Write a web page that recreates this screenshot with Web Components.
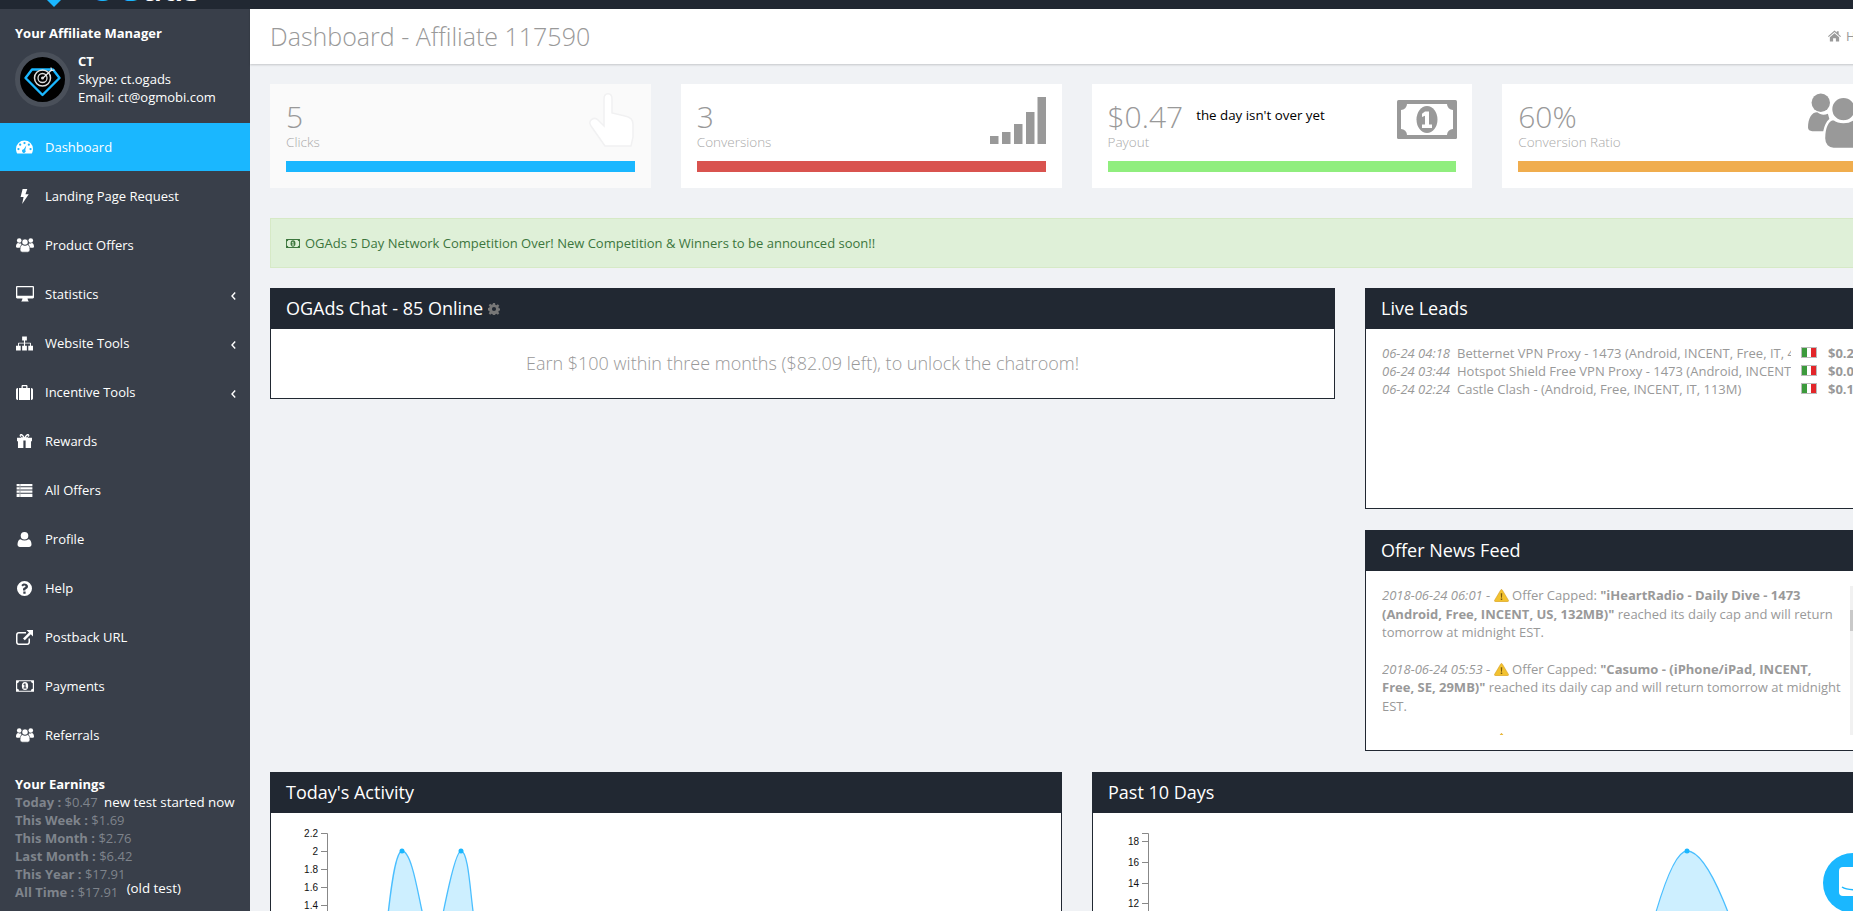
<!DOCTYPE html>
<html lang="en">
<head>
<meta charset="utf-8">
<title>OGAds Dashboard</title>
<style>
  html, body { margin: 0; height: 911px; overflow: hidden; background: #f0f2f5; }
  body { font: 13px/18px "Open Sans", "Liberation Sans", sans-serif; }
</style>
</head>
<body>
<og-app></og-app>

<script>
const ICONS = {
  dashboard: ['0 0 18 14', '<path fill-rule="evenodd" d="M9 0a9 9 0 0 1 9 9c0 2-.6 3.7-1.3 5H1.3C.6 12.7 0 11 0 9a9 9 0 0 1 9-9zM9 1.6a1.2 1.2 0 1 0 0 2.4 1.2 1.2 0 0 0 0-2.4zM4.4 3.4a1.2 1.2 0 1 0 0 2.4 1.2 1.2 0 0 0 0-2.4zM13.6 3.4a1.2 1.2 0 1 0 0 2.4 1.2 1.2 0 0 0 0-2.4zM2.6 8a1.2 1.2 0 1 0 0 2.4 1.2 1.2 0 0 0 0-2.4zM15.4 8a1.2 1.2 0 1 0 0 2.4 1.2 1.2 0 0 0 0-2.4zM11 5.2L8.2 9.4a1.9 1.9 0 1 0 1.6.7z"/>'],
  bolt: ['0 0 10 16', '<path d="M3 0h5L6 5.500h3.500L2.500 16 4 8.500H.8z"/>'],
  users: ['0 0 20 16', '<circle cx="3.600" cy="3" r="2.600"/><circle cx="16.400" cy="3" r="2.600"/><path d="M0 10c0-2.600 1-4.300 2.600-4.300 1 .8 2 .8 3 .4L7 11H1.200C.5 11 0 10.700 0 10zM20 10c0-2.600-1-4.300-2.600-4.300-1 .8-2 .8-3 .4L13 11h5.800c.7 0 1.200-.3 1.200-1z"/><circle cx="10" cy="4.800" r="3.500" stroke="var(--gap, transparent)" stroke-width=".7"/><path d="M4.500 13c0-3 1-5.400 2.800-5.400 1.500 1.100 3.900 1.100 5.400 0 1.800 0 2.800 2.400 2.800 5.400 0 1.900-1.200 3-2.700 3H7.200c-1.500 0-2.700-1.100-2.700-3z" stroke="var(--gap, transparent)" stroke-width=".7"/>'],
  desktop: ['0 0 18 16', '<path fill-rule="evenodd" d="M1.200 0h15.600C17.500 0 18 .5 18 1.200v10.100c0 .7-.5 1.200-1.200 1.200H11.500l.5 1.800.8 1.200H5.200l.8-1.200.5-1.800H1.200C.5 12.500 0 12 0 11.300V1.200C0 .5.500 0 1.200 0zM1.300 1.300v8.400h15.400V1.300z"/>'],
  sitemap: ['0 0 18 15', '<path d="M6.500 0h5v4.200H9.600v2.400h5.600c.4 0 .6.200.6.600v2.600H18V15h-5V9.800h1.800V7.600H9.600v2.200h1.900V15h-5V9.800h1.900V7.600H3.200v2.200H5V15H0V9.800h2.200V7.200c0-.4.200-.6.600-.6h5.600V4.200H6.500z"/>'],
  suitcase: ['0 0 17 15', '<path fill-rule="evenodd" d="M5.500 1.200C5.500.5 6 0 6.700 0h3.600c.7 0 1.200.5 1.200 1.200V3h2.500v12H3V3h2.500zM6.800 1.300V3h3.400V1.300zM2 3v12h-.3C.8 15 0 14.200 0 13.300V4.700C0 3.800.8 3 1.700 3zM15 3h.3c.9 0 1.700.8 1.700 1.700v8.600c0 .9-.8 1.700-1.700 1.700H15z"/>'],
  gift: ['0 0 16 15', '<path fill-rule="evenodd" d="M0 4h5.200C3.600 3.400 2.600 2.600 2.800 1.300 3 .2 4.600-.4 5.800.5 6.800 1.200 7.600 2.500 8 3.500 8.400 2.500 9.200 1.200 10.200.5c1.200-.9 2.800-.3 3 .8.2 1.300-.8 2.100-2.400 2.700H16v3.800h-1V15H1V7.800H0zM6.800 7v8h2.400V7zM4.400 1.600c-.6 0-.8.700-.3 1.200.5.400 1.500.9 2.500 1-.5-1-1.300-2.200-2.200-2.200zM11.600 1.600c-.9 0-1.700 1.200-2.200 2.200 1-.1 2-.6 2.500-1 .5-.5.3-1.200-.3-1.200z"/>'],
  list: ['0 0 17 14', '<path fill-rule="evenodd" d="M0 0h17v14H0zM0 2.500v1h17v-1zM0 6v1h17V6zM0 9.500v1h17v-1zM3.400 0v14h.5V0z"/>'],
  user: ['0 0 14 15', '<circle cx="7" cy="3.800" r="3.800"/><path d="M0 12.600C0 9.700 1 7.600 3 7.200c2.300 1.600 5.700 1.600 8 0 2 .4 3 2.500 3 5.400 0 1.500-1 2.400-2.500 2.400h-9C1 15 0 14.100 0 12.600z"/>'],
  help: ['0 0 15 15', '<path fill-rule="evenodd" d="M7.500 0a7.500 7.500 0 1 1 0 15 7.500 7.500 0 0 1 0-15zM6.300 10.500v2.200h2.300v-2.200zM7.600 2.500c-1.500 0-2.600.7-3.200 1.700l1.500 1.200c.4-.5.800-.9 1.500-.9.600 0 1.100.3 1.100.8 0 .6-.5.900-1.100 1.200-.8.400-1.400 1-1.400 2v.9h2.300c0-.7.200-1 1-1.400 1-.6 1.700-1.300 1.700-2.700 0-1.700-1.800-2.800-3.900-2.800z"/>'],
  external: ['0 0 17 15', '<path d="M2.800 2h7.200v1.500H3c-.8 0-1.500.6-1.500 1.500v7c0 .9.700 1.500 1.500 1.500h8c.8 0 1.500-.6 1.500-1.500V8.500H14V12.200c0 1.600-1.200 2.800-2.800 2.800H2.800C1.200 15 0 13.800 0 12.200V4.800C0 3.200 1.200 2 2.800 2z"/><path d="M10.500 0H17v6.500l-2.200-2.200-6 6-1.800-1.800 6-6z"/>'],
  money: ['0 0 60 39', '<rect width="60" height="39" rx="1.500"/><path fill="var(--gap, #fff)" d="M10 4H50a6 6 0 0 0 6 6V29a6 6 0 0 0-6 6H10a6 6 0 0 0-6-6V10a6 6 0 0 0 6-6z"/><ellipse cx="30" cy="19.500" rx="10.500" ry="13.500"/><path fill="var(--gap, #fff)" d="M28 11.500h4v13h3V28h-10v-3.500h3v-8.800l-3 1.300v-3.200z"/>'],
  bars: ['0 0 56 47', '<rect y="39" width="8.500" height="8"/><rect x="12" y="35" width="8.500" height="12"/><rect x="24" y="27" width="8.500" height="20"/><rect x="36" y="15" width="8.500" height="32"/><rect x="47.500" width="8.500" height="47"/>'],
  hand: ['0 0 47 54', '<path stroke="#f1f1f2" stroke-width="1.500" d="M16 6c0-7 8-7 8 0v14l13 3c5 1 8 4 8 8v13l-2 9H17L3 33c-4-5 3-10 7-6l6 6z"/>'],
  gear: ['0 0 14 14', '<path fill-rule="evenodd" d="M5.800 0h2.400l.3 2 1.300.6 1.700-1.200 1.700 1.700-1.200 1.700.6 1.300 2 .3v2.400l-2 .3-.6 1.300 1.200 1.700-1.700 1.700-1.700-1.200-1.300.6-.3 2H5.800l-.3-2-1.300-.6-1.700 1.200-1.700-1.700 1.200-1.700-.6-1.300-2-.3V5.800l2-.3.600-1.300L.8 2.500l1.700-1.700 1.700 1.200 1.300-.6zM7 4.600a2.400 2.400 0 1 0 0 4.800 2.400 2.400 0 0 0 0-4.800z"/>'],
  home: ['0 0 14 12', '<path d="M7 0l2.500 2.200V1h2v3l2.500 2.200-.8.9L7 1.800.8 7.100 0 6.200z"/><path d="M2 7.400L7 3.100l5 4.300V12H8.500V8.500h-3V12H2z"/>'],
  warn: ['0 0 16 14', '<path fill="#f2c230" stroke="#d39a1c" stroke-width=".6" d="M8 .6c.5 0 .8.3 1 .7l6.400 10.800c.4.800 0 1.500-.9 1.500h-13c-.9 0-1.300-.7-.9-1.500L7 1.300c.2-.4.500-.7 1-.7z"/><path fill="#7a5a10" d="M7.200 4.500h1.600l-.3 5h-1zM7.200 10.300h1.600v1.500H7.200z"/>']
}

class OgIcon extends HTMLElement {
  connectedCallback () {
    const [box, body] = ICONS[this.getAttribute('name')]
    const width = this.getAttribute('width') || 17
    const height = this.getAttribute('height') || 15
    this.attachShadow({ mode: 'open' }).innerHTML = `
      <style>:host { display: inline-flex; line-height: 0; } svg { fill: currentColor; }</style>
      <svg width="${width}" height="${height}" viewBox="${box}">${body}</svg>`
  }
}
customElements.define('og-icon', OgIcon)

class OgTopbar extends HTMLElement {
  connectedCallback () {
    this.attachShadow({ mode: 'open' }).innerHTML = `
      <style>
        :host { display: flex; height: 9px; background: #212832; overflow: hidden; position: relative; align-items: flex-end; padding-left: 47px; }
        svg { align-self: flex-start; }
        .logo { font: 700 32px/30px "Open Sans", sans-serif; margin: 0 0 5px 29px; letter-spacing: 1px; color: #fff; white-space: nowrap; }
        .logo span { color: #1ab7ff; letter-spacing: 2px; }
      </style>
      <svg width="14" height="7" viewBox="0 0 14 7"><path fill="#1ab7ff" d="M0 0h14L7 7z"/></svg>
      <div class="logo"><span>OG</span>ads</div>`
  }
}
customElements.define('og-topbar', OgTopbar)

class OgNavItem extends HTMLElement {
  connectedCallback () {
    const arrow = this.hasAttribute('arrow') ? '<svg class="arrow" width="5" height="8" viewBox="0 0 5 8"><path d="M4.200 .5L1 4l3.200 3.500" fill="none" stroke="#fff" stroke-width="1.400"/></svg>' : ''
    const box = (this.getAttribute('size') || '17,15').split(',')
    this.attachShadow({ mode: 'open' }).innerHTML = `
      <style>
        :host { display: flex; align-items: center; height: 48px; margin-bottom: 1px; padding-left: 16px; color: #fff; position: relative; --gap: #393f4a; }
        :host([active]) { background: #1ab7ff; --gap: #1ab7ff; color: #fff; }
        .ic { width: 29px; display: flex; justify-content: flex-start; }
        .arrow { position: absolute; left: 231px; top: 22px; }
      </style>
      <span class="ic"><og-icon name="${this.getAttribute('icon')}" width="${box[0]}" height="${box[1]}"></og-icon></span>
      <slot></slot>${arrow}`
  }
}
customElements.define('og-nav-item', OgNavItem)

class OgSidebar extends HTMLElement {
  connectedCallback () {
    this.attachShadow({ mode: 'open' }).innerHTML = `
      <style>
        :host { display: block; width: 250px; flex: none; height: 902px; background: #393f4a; color: #fff; overflow: hidden; }
        .manager { padding: 15px 15px 0; height: 99px; box-sizing: content-box; }
        h4 { margin: 0 0 10px; font-size: 13px; line-height: 18px; font-weight: 700; }
        .who { display: flex; gap: 8px; }
        .avatar { width: 55px; height: 55px; flex: none; }
        .who b { display: block; }
        .earnings { padding: 15px 15px 0; color: #7f848c; }
        .earnings h4 { margin: 0; color: #fff; }
        .earnings div { white-space: nowrap; }
        .earnings b { font-weight: 700; }
        .note { color: #fff; margin-left: 3px; font-size: 13.330px; }
        .old { color: #fff; margin-left: 5px; position: relative; top: -4px; font-size: 13.330px; }
      </style>
      <div class="manager">
        <h4>Your Affiliate Manager</h4>
        <div class="who">
          <svg class="avatar" viewBox="0 0 55 55">
            <circle cx="27.500" cy="27.500" r="25" fill="#000" stroke="#4a505a" stroke-width="5"/>
            <path d="M17 17.500h21l6.500 8.500L27.500 43 10.500 26z" fill="none" stroke="#1ab7ff" stroke-width="2.400" stroke-linejoin="round"/>
            <circle cx="27.500" cy="26" r="8" fill="none" stroke="#ddd" stroke-width="1.500"/>
            <circle cx="27.500" cy="26" r="4.500" fill="none" stroke="#ddd" stroke-width="1.300"/>
            <circle cx="27.500" cy="26" r="1.500" fill="#ddd"/>
            <path d="M28 26l9-8.500M36 15.500l.5 3 3-.5" fill="none" stroke="#eee" stroke-width="1.200"/>
          </svg>
          <div><b>CT</b>Skype: ct.ogads<br>Email: ct@ogmobi.com</div>
        </div>
      </div>
      <og-nav-item icon="dashboard" size="17,14" active>Dashboard</og-nav-item>
      <og-nav-item icon="bolt" size="17,15">Landing Page Request</og-nav-item>
      <og-nav-item icon="users" size="18,16">Product Offers</og-nav-item>
      <og-nav-item icon="desktop" size="18,16" arrow>Statistics</og-nav-item>
      <og-nav-item icon="sitemap" size="17,15" arrow>Website Tools</og-nav-item>
      <og-nav-item icon="suitcase" size="17,15" arrow>Incentive Tools</og-nav-item>
      <og-nav-item icon="gift" size="17,14">Rewards</og-nav-item>
      <og-nav-item icon="list" size="17,13">All Offers</og-nav-item>
      <og-nav-item icon="user" size="17,15">Profile</og-nav-item>
      <og-nav-item icon="help" size="17,15">Help</og-nav-item>
      <og-nav-item icon="external" size="17,15">Postback URL</og-nav-item>
      <og-nav-item icon="money" size="18,12">Payments</og-nav-item>
      <og-nav-item icon="users" size="18,16">Referrals</og-nav-item>
      <div class="earnings">
        <h4>Your Earnings</h4>
        <div><b>Today :</b> $0.47 <span class="note">new test started now</span></div>
        <div><b>This Week :</b> $1.69</div>
        <div><b>This Month :</b> $2.76</div>
        <div><b>Last Month :</b> $6.42</div>
        <div><b>This Year :</b> $17.91</div>
        <div><b>All Time :</b> $17.91 <span class="old">(old test)</span></div>
      </div>`
  }
}
customElements.define('og-sidebar', OgSidebar)

class OgStat extends HTMLElement {
  connectedCallback () {
    const icon = this.getAttribute('icon')
    const [w, h, right, top] = this.getAttribute('box').split(',')
    this.attachShadow({ mode: 'open' }).innerHTML = `
      <style>
        :host { display: block; position: relative; height: 104px; background: var(--card, #fff); padding: 0 16px; box-sizing: border-box; --gap: #fff; overflow: hidden; }
        .value { padding-top: 13px; display: flex; align-items: flex-start; height: 36px; font: 300 30px/40px "Open Sans", sans-serif; color: #999; }
        .label { font-size: 13.500px; font-weight: 300; line-height: 18px; height: 28px; color: #aaa; }
        .bar { height: 11px; background: var(--bar); }
        ::slotted([slot=note]) { color: #000; font: 400 13.330px/18px "Open Sans", sans-serif; margin: 9px 0 0 13px; }
        og-icon { position: absolute; right: ${right}px; top: ${top}px; color: var(--icon, #999); }
      </style>
      <div class="value">${this.getAttribute('value')}<slot name="note"></slot></div>
      <div class="label">${this.getAttribute('label')}</div>
      <div class="bar"></div>
      <og-icon name="${icon}" width="${w}" height="${h}"></og-icon>`
  }
}
customElements.define('og-stat', OgStat)

class OgPanel extends HTMLElement {
  connectedCallback () {
    this.attachShadow({ mode: 'open' }).innerHTML = `
      <style>
        :host { display: flex; flex-direction: column; background: #fff; border: 1px solid #212832; border-top: 0; box-sizing: border-box; }
        header { margin: 0 -1px; height: 41px; flex: none; background: #212832; color: #fff; font-size: 18px; line-height: 41px; padding-left: 16px; display: flex; align-items: center; gap: 5px; }
        .body { flex: 1; overflow: hidden; min-height: 0; }
      </style>
      <header>${this.getAttribute('heading')}<slot name="extra"></slot></header>
      <div class="body"><slot></slot></div>`
  }
}
customElements.define('og-panel', OgPanel)

class OgLeads extends HTMLElement {
  connectedCallback () {
    const rows = [
      ['06-24 04:18', 'Betternet VPN Proxy - 1473 (Android, INCENT, Free, IT, 4', '$0.2'],
      ['06-24 03:44', 'Hotspot Shield Free VPN Proxy - 1473 (Android, INCENT', '$0.0'],
      ['06-24 02:24', 'Castle Clash - (Android, Free, INCENT, IT, 113M)', '$0.1']
    ]
    this.attachShadow({ mode: 'open' }).innerHTML = `
      <style>
        :host { display: block; padding: 15px 16px 0; color: #999; font-size: 13px; line-height: 18px; }
        .row { display: flex; white-space: nowrap; height: 18px; }
        i { width: 75px; flex: none; }
        .name { width: 334px; flex: none; overflow: hidden; margin-right: 10px; }
        .flag { width: 16px; height: 11px; flex: none; margin: 3px 11px 0 0; background: linear-gradient(90deg, #3c9a3c 0 33%, #fff 33% 66%, #e2262a 66%); border: 1px solid #bbb; box-sizing: border-box; }
        b { font-weight: 700; }
      </style>
      ${rows.map(r => `<div class="row"><i>${r[0]}</i><span class="name">${r[1]}</span><span class="flag"></span><b>${r[2]}</b></div>`).join('')}`
  }
}
customElements.define('og-leads', OgLeads)

class OgNews extends HTMLElement {
  connectedCallback () {
    const warn = '<og-icon name="warn" width="15" height="13"></og-icon>'
    this.attachShadow({ mode: 'open' }).innerHTML = `
      <style>
        :host { display: flex; height: 149px; margin: 15px 0 0 16px; color: #999; font-size: 13px; line-height: 18.500px; overflow: hidden; }
        .feed { width: 460px; margin-right: 8px; flex: none; overflow: hidden; height: 149px; }
        p { margin: 0 0 15px; }
        p + p { margin-top: 18px; }
        og-icon { vertical-align: -2px; }
        .track { width: 7px; height: 149px; background: #f1f1f1; padding-top: 24px; box-sizing: border-box; flex: none; }
        .thumb { height: 21px; background: #c9c9c9; width: 3px; }
        .tip { display: block; margin: 0 0 0 112px; }
      </style>
      <div class="feed">
        <p><i>2018-06-24 06:01</i> - ${warn} Offer Capped: <b>"iHeartRadio - Daily Dive - 1473 (Android, Free, INCENT, US, 132MB)"</b> reached its daily cap and will return tomorrow at midnight EST.</p>
        <p><i>2018-06-24 05:53</i> - ${warn} Offer Capped: <b>"Casumo - (iPhone/iPad, INCENT, Free, SE, 29MB)"</b> reached its daily cap and will return tomorrow at midnight EST.</p>
        <span class="tip">${warn}</span>
      </div>
      <div class="track"><div class="thumb"></div></div>`
  }
}
customElements.define('og-news', OgNews)

class OgChart extends HTMLElement {
  connectedCallback () {
    const axisX = +this.getAttribute('axis')
    const ticks = JSON.parse(this.getAttribute('ticks'))
    const dots = JSON.parse(this.getAttribute('dots'))
    const curve = this.getAttribute('curve')
    const tickMarks = ticks.map(([label, y]) => `<path d="M${axisX - 6} ${y}.5H${axisX}" stroke="#888"/><text x="${axisX - 9}" y="${y + 4}" text-anchor="end">${label}</text>`).join('')
    this.attachShadow({ mode: 'open' }).innerHTML = `
      <style>
        :host { display: block; height: 240px; }
        svg { display: block; }
        text { font: 10px "Liberation Sans", Arial, sans-serif; fill: #111; }
      </style>
      <svg width="790" height="240">
        <path d="${curve}" fill="#1ab7ff" fill-opacity=".22" stroke="#4bbfff" stroke-width="1.300"/>
        ${dots.map(([x, y]) => `<circle cx="${x}" cy="${y}" r="2.500" fill="#1ab7ff"/>`).join('')}
        <path d="M${axisX - 6} 20.500H${axisX}.500V240" fill="none" stroke="#888"/>
        ${tickMarks}
      </svg>`
  }
}
customElements.define('og-chart', OgChart)

class OgLauncher extends HTMLElement {
  connectedCallback () {
    this.attachShadow({ mode: 'open' }).innerHTML = `
      <style>
        :host { position: fixed; left: 1823px; top: 853px; width: 60px; height: 60px; border-radius: 50%; background: #1ab7ff; }
        svg { display: block; margin: 14px 0 0 16px; }
      </style>
      <svg width="28" height="30" viewBox="0 0 28 30"><rect width="28" height="29" rx="4" fill="#fff"/><path d="M3 20c5 3.500 17 3.500 22 0" fill="none" stroke="#1ab7ff" stroke-width="1.500"/></svg>`
  }
}
customElements.define('og-launcher', OgLauncher)

class OgApp extends HTMLElement {
  connectedCallback () {
    this.attachShadow({ mode: 'open' }).innerHTML = `
      <style>
        :host { display: block; width: 1904px; color: #999; }
        .shell { display: flex; }
        main { width: 1654px; flex: none; }
        .page-head { height: 55px; background: #fff; box-shadow: 0 1px 2px rgba(0,0,0,.18); display: flex; align-items: center; justify-content: space-between; padding: 0 20px; position: relative; }
        h1 { margin: 0; font: 300 25px/1 "Open Sans", sans-serif; color: #999; }
        .crumb { display: flex; align-items: center; gap: 5px; color: #999; margin-left: auto; width: 37px; position: relative; left: -19px; top: -1px; white-space: nowrap; }
        .content { padding: 20px 20px 0; display: flex; flex-direction: column; }
        .stats { display: grid; grid-template-columns: repeat(4, 380.750px); gap: 30px; }
        .alert { margin-top: 30px; height: 50px; box-sizing: border-box; background: #dff0d8; border: 1px solid #d6e9c6; color: #3c763d; display: flex; align-items: center; gap: 5px; padding-left: 15px; --gap: #dff0d8; }
        .top { display: grid; grid-template-columns: 1065px 518px; gap: 30px; margin-top: 20px; align-items: start; }
        .chat { height: 111px; }
        .chat-msg { text-align: center; font: 300 18px/24px "Open Sans", sans-serif; color: #999; padding-top: 22px; }
        .side { display: flex; flex-direction: column; gap: 21px; }
        .side og-panel { height: 221px; }
        .bottom { display: grid; grid-template-columns: 792px 792px; gap: 30px; margin-top: 21px; }
      </style>
      <og-topbar></og-topbar>
      <div class="shell">
        <og-sidebar></og-sidebar>
        <main>
          <div class="page-head">
            <h1>Dashboard - Affiliate 117590</h1>
            <span class="crumb"><og-icon name="home" width="13" height="12"></og-icon>Home</span>
          </div>
          <div class="content">
            <div class="stats">
              <og-stat value="5" label="Clicks" icon="hand" box="47,54,16,9" style="--bar:#1ab7ff;--card:#fafafa;--icon:#fff"></og-stat>
              <og-stat value="3" label="Conversions" icon="bars" box="56,47,16,13" style="--bar:#d9534f"></og-stat>
              <og-stat value="$0.47" label="Payout" icon="money" box="60,39,15,16" style="--bar:#90ee7e"><span slot="note">the day isn't over yet</span></og-stat>
              <og-stat value="60%" label="Conversion Ratio" icon="users" box="71,57,4,8" style="--bar:#f0ad4e"></og-stat>
            </div>
            <div class="alert"><og-icon name="money" width="14" height="11"></og-icon>OGAds 5 Day Network Competition Over! New Competition &amp; Winners to be announced soon!!</div>
            <div class="top">
              <og-panel class="chat" heading="OGAds Chat - 85 Online">
                <og-icon slot="extra" name="gear" width="12" height="12" style="color:#777"></og-icon>
                <div class="chat-msg">Earn $100 within three months ($82.09 left), to unlock the chatroom!</div>
              </og-panel>
              <div class="side">
                <og-panel heading="Live Leads"><og-leads></og-leads></og-panel>
                <og-panel heading="Offer News Feed"><og-news></og-news></og-panel>
              </div>
            </div>
            <div class="bottom">
              <og-panel heading="Today's Activity">
                <og-chart axis="56" ticks='[["2.2",20],["2",38],["1.8",56],["1.6",74],["1.4",92]]' dots='[[131,38],[190,38]]'
                  curve="M113 140C116 112 122 38 131 38C140 38 146 75 151 98C155 115 158 130 160 140M165 140C168 120 183 38 190 38C197 38 199 75 202 98C204 115 206 130 208 140"></og-chart>
              </og-panel>
              <og-panel heading="Past 10 Days">
                <og-chart axis="55" ticks='[[18,28],[16,49],[14,70],[12,90]]' dots='[[594,38]]'
                  curve="M530 240C550 140 575 38 594 38C615 38 640 100 680 240"></og-chart>
              </og-panel>
            </div>
          </div>
        </main>
      </div>
      <og-launcher></og-launcher>`
  }
}
customElements.define('og-app', OgApp)
</script>
</body>
</html>
